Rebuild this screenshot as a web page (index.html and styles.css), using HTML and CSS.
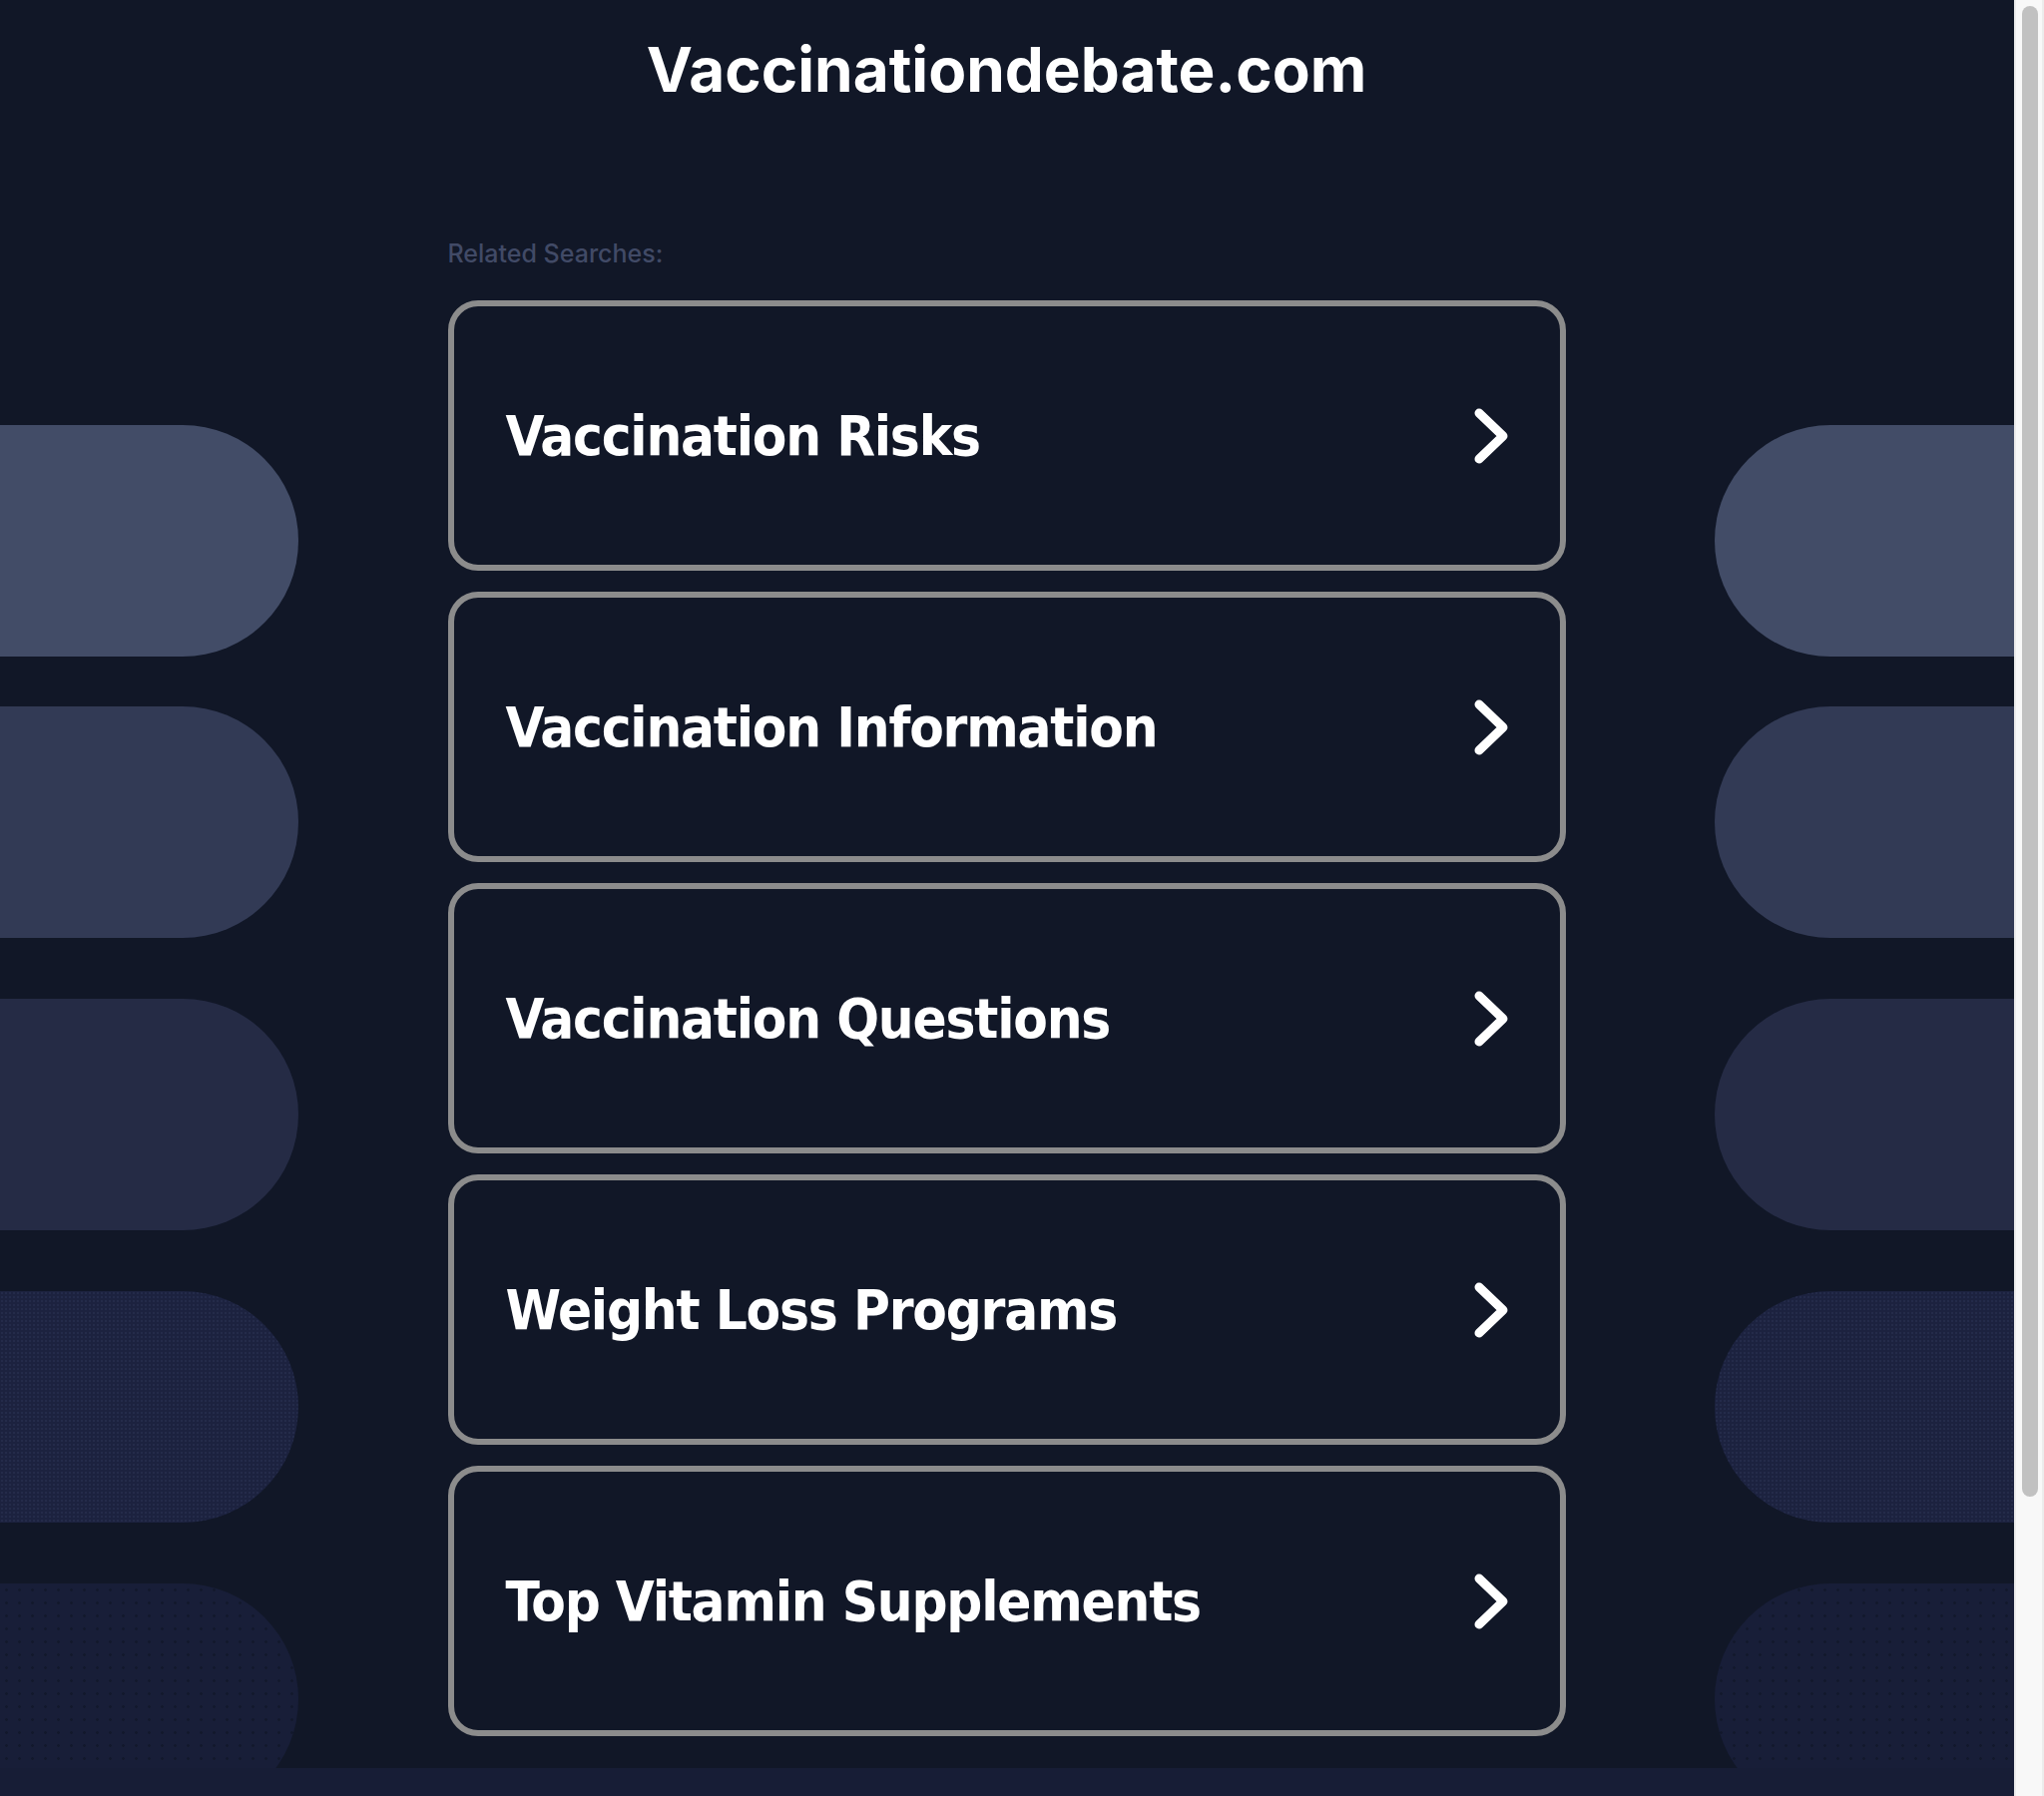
FILE: index.html
```html
<!DOCTYPE html>
<html lang="en">
<head>
<meta charset="utf-8">
<title>Vaccinationdebate.com</title>
<link rel="stylesheet" href="styles.css">
</head>
<body>
<div class="page">
  <div class="main">
    <div class="stage">
      <div class="side side-left">
        <div class="pill pill-1"></div>
        <div class="pill pill-2"></div>
        <div class="pill pill-3"></div>
        <div class="pill pill-4"></div>
        <div class="pill pill-5"></div>
      </div>
      <div class="center">
        <h1 class="domain">Vaccinationdebate.com</h1>
        <div class="related">
          <p class="related-title">Related Searches:</p>
          <ul class="links">
            <li><a class="link-card" href="#"><span class="link-text">Vaccination Risks</span><svg class="chev" viewBox="0 0 34 56" width="34" height="56"><polyline points="5,5 29,28 5,51"/></svg></a></li>
            <li><a class="link-card" href="#"><span class="link-text">Vaccination Information</span><svg class="chev" viewBox="0 0 34 56" width="34" height="56"><polyline points="5,5 29,28 5,51"/></svg></a></li>
            <li><a class="link-card" href="#"><span class="link-text">Vaccination Questions</span><svg class="chev" viewBox="0 0 34 56" width="34" height="56"><polyline points="5,5 29,28 5,51"/></svg></a></li>
            <li><a class="link-card" href="#"><span class="link-text">Weight Loss Programs</span><svg class="chev" viewBox="0 0 34 56" width="34" height="56"><polyline points="5,5 29,28 5,51"/></svg></a></li>
            <li><a class="link-card" href="#"><span class="link-text">Top Vitamin Supplements</span><svg class="chev" viewBox="0 0 34 56" width="34" height="56"><polyline points="5,5 29,28 5,51"/></svg></a></li>
          </ul>
        </div>
      </div>
      <div class="side side-right">
        <div class="pill pill-1"></div>
        <div class="pill pill-2"></div>
        <div class="pill pill-3"></div>
        <div class="pill pill-4"></div>
        <div class="pill pill-5"></div>
      </div>
    </div>
    <div class="footer-band"></div>
  </div>
  <div class="scrollbar"><div class="thumb"></div></div>
</div>
</body>
</html>
```

FILE: styles.css
```css
html, body {
  margin: 0;
  padding: 0;
  height: 1800px;
  overflow: hidden;
  background: #111727;
}

.page {
  display: flex;
  height: 1800px;
}

.main {
  width: 2018px;
  display: flex;
  flex-direction: column;
  background: #111727;
}

.stage {
  height: 1772px;
  display: grid;
  grid-template-columns: 299px 1fr 300px;
  overflow: hidden;
}

.side {
  display: flex;
  flex-direction: column;
  padding-top: 426px;
  overflow: hidden;
}

.pill {
  height: 232px;
  flex: none;
  margin-top: 61px;
}

.pill-1 { margin-top: 0; background: #424c67; }
.pill-2 { margin-top: 50px; background: #323a55; }
.pill-3 { background: #252b45; }
.pill-4 {
  background-color: #1c223f;
  background-image: radial-gradient(circle, #242b4a 0.8px, transparent 1.2px);
  background-size: 4px 4px;
}
.pill-5 {
  background-color: #181e38;
  background-image: radial-gradient(circle, #12182c 1.1px, transparent 1.6px);
  background-size: 13px 13px;
}

.side-left .pill { border-radius: 0 116px 116px 0; }
.side-right .pill { border-radius: 116px 0 0 116px; }

.center {
  display: flex;
  flex-direction: column;
  align-items: center;
}

.domain {
  margin: 0;
  padding-top: 30px;
  font-family: "Inter", "Liberation Sans", sans-serif;
  font-weight: 700;
  font-size: 62px;
  line-height: 80px;
  color: #ffffff;
}

.related {
  width: 1120px;
  margin-top: 125px;
}

.related-title {
  margin: 0 0 28px 0;
  font-family: "Inter", "Liberation Sans", sans-serif;
  font-weight: 500;
  font-size: 25px;
  line-height: 38px;
  color: #414a66;
}

.links {
  list-style: none;
  margin: 0;
  padding: 0;
  display: flex;
  flex-direction: column;
  gap: 21px;
}

.link-card {
  box-sizing: border-box;
  height: 271px;
  display: flex;
  align-items: center;
  justify-content: space-between;
  padding: 0 52px;
  border: 6px solid #8c8c8c;
  border-radius: 30px;
  text-decoration: none;
  background: #111727;
}

.link-text {
  font-family: "DejaVu Sans Condensed", "DejaVu Sans", sans-serif;
  font-stretch: condensed;
  font-weight: 700;
  font-size: 56px;
  letter-spacing: -1.2px;
  color: #ffffff;
}

.chev {
  fill: none;
  stroke: #ffffff;
  stroke-width: 9;
  stroke-linecap: round;
  stroke-linejoin: round;
}

.footer-band {
  flex: 1;
  background: #171d36;
}

.scrollbar {
  width: 30px;
  box-sizing: border-box;
  background: #f8f8f8;
  border-left: 2px solid #ececec;
  border-right: 2px solid #ececec;
  padding: 6px 0 0 6px;
}

.thumb {
  width: 16px;
  height: 1494px;
  border-radius: 8px;
  background: #c1c1c1;
}
```
